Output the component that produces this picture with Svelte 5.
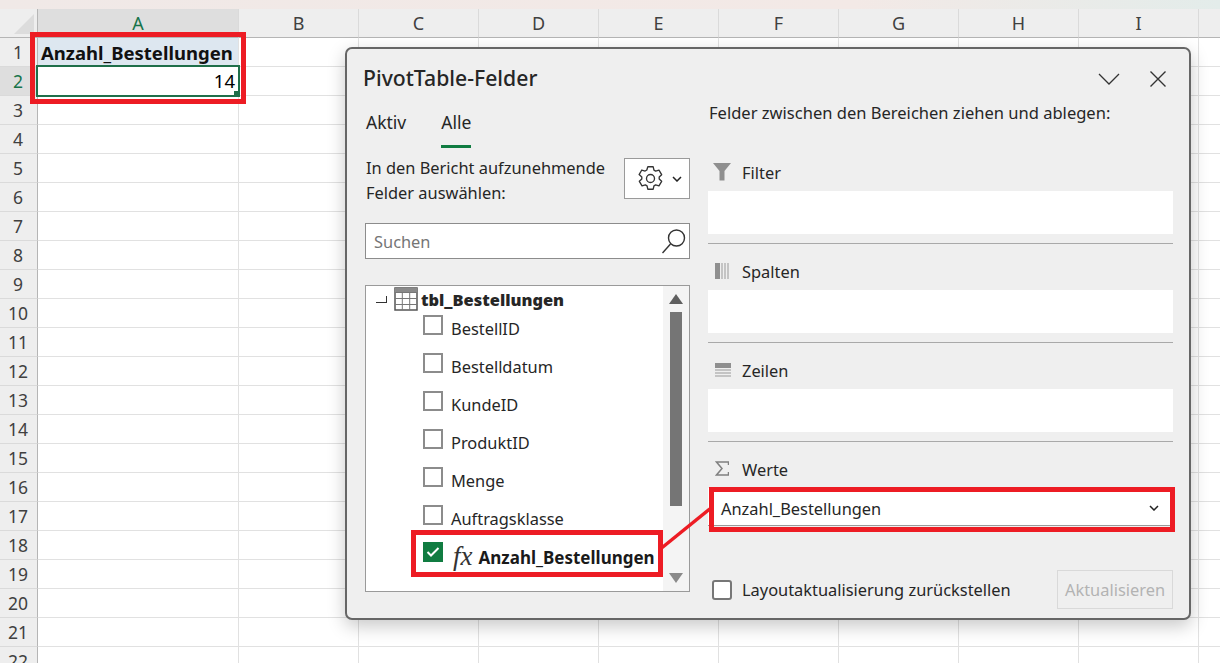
<script lang="ts">
  const cols = ["A", "B", "C", "D", "E", "F", "G", "H", "I", ""];
  const rows = Array.from({ length: 22 }, (_, i) => i + 1);
  const fields = ["BestellID", "Bestelldatum", "KundeID", "ProduktID", "Menge", "Auftragsklasse"];
  const areas = [
    { name: "Filter", icon: "filter" },
    { name: "Spalten", icon: "cols" },
    { name: "Zeilen", icon: "rows" },
  ];
</script>

<div class="sheet">
  <div class="topstrip"></div>

  <div class="grid">
    <div class="corner"><span class="tri"></span></div>
    {#each cols as c, i}
      <div class="colhead" class:sel={i === 0}>{c}</div>
    {/each}

    {#each rows as r}
      <div class="rowhead" class:sel={r === 2}>{r}</div>
      {#each cols as c, i}
        <div class="cell" class:head={r === 1 && i === 0} class:active={r === 2 && i === 0}>
          {#if r === 1 && i === 0}Anzahl_Bestellungen{/if}
          {#if r === 2 && i === 0}14<span class="handle"></span>{/if}
        </div>
      {/each}
    {/each}
  </div>

  <div class="mark mark-cell"></div>

  <section class="dialog">
    <div class="left">
      <h1>PivotTable-Felder</h1>
      <div class="tabs">
        <span>Aktiv</span>
        <span class="on">Alle</span>
      </div>
      <div class="pick">
        <p>In den Bericht aufzunehmende<br />Felder auswählen:</p>
        <button class="gear" aria-label="Einstellungen">
          <svg width="29" height="27" viewBox="0 0 26 24" fill="none" stroke="#333" stroke-width="1.2" stroke-linejoin="round">
            <path d="M10.6 1.5h4.8l.7 3 1.5.9 3-.9 2.4 4.1-2.2 2.1v1.700l2.2 2.1-2.4 4.1-3-.9-1.5.9-.7 3h-4.8l-.7-3-1.5-.9-3 .9-2.4-4.1 2.2-2.1v-1.700L2.800 8.500l2.400-4.100 3 .9 1.500-.9z" />
            <circle cx="13" cy="12" r="3.600" />
          </svg>
          <svg class="chev" width="10" height="6" viewBox="0 0 10 6" fill="none" stroke="#222" stroke-width="1.500"><path d="M1 1l4 4 4-4" /></svg>
        </button>
      </div>
      <div class="search">
        <span>Suchen</span>
        <svg width="26" height="27" viewBox="0 0 26 27" fill="none" stroke="#333" stroke-width="1.400"><circle cx="15.500" cy="10" r="8" /><path d="M9.500 16L1.500 25" /></svg>
      </div>
      <div class="list">
        <div class="tree">
          <div class="tablerow">
            <span class="collapse"></span>
            <svg width="24" height="24" viewBox="0 0 24 24" fill="#fff" stroke="#555" stroke-width="1">
              <rect x="1" y="1" width="22" height="22" fill="#fff" stroke-width="1.500" />
              <rect x="1" y="1" width="22" height="4.500" fill="#8a8a8a" stroke="none" />
              <path d="M1 5.500h22M1 11.500h22M1 17.500h22M8.300 5.500v17.500M15.700 5.500v17.500" stroke="#777" />
            </svg>
            <b>tbl_Bestellungen</b>
          </div>
          {#each fields as f}
            <div class="field"><span class="box"></span><span>{f}</span></div>
          {/each}
          <div class="field checked">
            <span class="box">
              <svg width="14" height="12" viewBox="0 0 14 12" fill="none" stroke="#fff" stroke-width="2"><path d="M1.500 6l3.500 3.500 7.500-7.500" /></svg>
            </span>
            <i>fx</i><b>Anzahl_Bestellungen</b>
            <div class="mark mark-field"></div>
          </div>
        </div>
        <div class="scroll">
          <span class="up"></span>
          <span class="thumb"></span>
          <span class="down"></span>
        </div>
      </div>
    </div>

    <div class="right">
      <div class="winbtns">
        <svg width="22" height="12" viewBox="0 0 22 12" fill="none" stroke="#333" stroke-width="1.300"><path d="M1 1l10 10 10-10" /></svg>
        <svg width="18" height="18" viewBox="0 0 18 18" fill="none" stroke="#333" stroke-width="1.400"><path d="M1.500 1.500l15 15M16.500 1.500l-15 15" /></svg>
      </div>
      <p class="hint">Felder zwischen den Bereichen ziehen und ablegen:</p>

      {#each areas as a}
        <div class="area">
          <div class="label">
            <span class="ico">
              {#if a.icon === "filter"}
                <svg class="funnel" width="20" height="18" viewBox="0 0 20 18" fill="#8f8f8f"><path d="M1 0h18l-6.500 8v9.500h-5V8z" /></svg>
              {:else if a.icon === "cols"}
                <svg width="14" height="16" viewBox="0 0 14 16" fill="#999"><rect x="0" y="0" width="5" height="16" fill="#8f8f8f" /><rect x="6.500" y="0" width="1" height="16" /><rect x="9.500" y="0" width="1" height="16" /><rect x="12.500" y="0" width="1" height="16" /></svg>
              {:else}
                <svg width="16" height="14" viewBox="0 0 16 14" fill="#999"><rect x="0" y="0" width="16" height="5" fill="#8f8f8f" /><rect x="0" y="6.500" width="16" height="1" /><rect x="0" y="9.500" width="16" height="1" /><rect x="0" y="12.500" width="16" height="1" /></svg>
              {/if}
            </span>
            {a.name}
          </div>
          <div class="drop"></div>
        </div>
      {/each}

      <div class="area last">
        <div class="label">
          <span class="ico"><svg width="14" height="15" viewBox="0 0 14 15" fill="none" stroke="#808080" stroke-width="1.500"><path d="M13.500 4V1H1.500l5.500 6.500L1.500 14h12v-3" /></svg></span>
          Werte
        </div>
        <div class="drop value">
          <span>Anzahl_Bestellungen</span>
          <svg width="10" height="6" viewBox="0 0 10 6" fill="none" stroke="#222" stroke-width="1.500"><path d="M1 1l4 4 4-4" /></svg>
          <div class="mark mark-value"></div>
        </div>
      </div>

      <div class="foot">
        <label><span class="defer"></span>Layoutaktualisierung zurückstellen</label>
        <button class="update" disabled>Aktualisieren</button>
      </div>
    </div>

    <svg class="link" width="60" height="46" viewBox="0 0 60 46"><path d="M2 43.500L52 3" stroke="#ed1c24" stroke-width="3.500" fill="none" /></svg>
  </section>
</div>

<style>
  :global(body) {
    margin: 0;
    background: #fff;
  }
  .sheet {
    position: relative;
    width: 1220px;
    height: 663px;
    overflow: hidden;
    font-family: "Noto Sans", "Open Sans", sans-serif;
    color: #262626;
  }
  .topstrip {
    height: 9px;
    background: linear-gradient(90deg, #f0e9e7, #f3e9e6 70%, #e3ecea);
  }
  .grid {
    display: grid;
    grid-template-columns: 38px 201px repeat(9, 120px);
    grid-template-rows: repeat(23, 29px);
    background: #fff;
  }
  .corner {
    background: #eeeeee;
    border-right: 1px solid #b5b5b5;
    border-bottom: 1px solid #b5b5b5;
    box-sizing: border-box;
    display: flex;
    align-items: flex-end;
    justify-content: flex-end;
    padding: 0 3px 3px 0;
  }
  .tri {
    width: 0;
    height: 0;
    border-left: 20px solid transparent;
    border-bottom: 20px solid #dcdcdc;
  }
  .colhead {
    background: #eeeeee;
    border-right: 1px solid #dadada;
    border-bottom: 1px solid #b5b5b5;
    box-sizing: border-box;
    display: flex;
    align-items: center;
    justify-content: center;
    font-size: 18px;
    color: #404040;
  }
  .colhead.sel {
    background: #dedede;
    color: #17744a;
  }
  .rowhead {
    background: #eeeeee;
    border-right: 1px solid #b5b5b5;
    border-bottom: 1px solid #dadada;
    box-sizing: border-box;
    display: flex;
    align-items: center;
    justify-content: center;
    font-size: 17.500px;
    color: #404040;
    padding-right: 1px;
  }
  .rowhead.sel {
    background: #dedede;
    color: #17744a;
  }
  .cell {
    border-right: 1px solid #e1e1e1;
    border-bottom: 1px solid #e1e1e1;
    box-sizing: border-box;
    position: relative;
    font-size: 18.500px;
    color: #000;
    min-width: 0;
  }
  .cell.head {
    background: #dde7f0;
    font-weight: 700;
    padding-left: 3px;
    line-height: 29px;
    white-space: nowrap;
    color: #111;
  }
  .cell.active {
    z-index: 2;
    border: 2px solid #1f6f4a;
    text-align: right;
    padding-right: 3px;
    line-height: 27px;
    margin: -2px 0 0 -2px;
    width: 204px;
    height: 32px;
    box-sizing: border-box;
    background: #fff;
  }
  .handle {
    position: absolute;
    right: -2px;
    bottom: -2px;
    width: 6px;
    height: 6px;
    background: #1f6f4a;
  }
  .mark {
    position: absolute;
    z-index: 1;
    border: 5px solid #ed1c24;
    box-sizing: border-box;
    pointer-events: none;
  }
  .mark-cell {
    left: 30px;
    top: 32px;
    width: 216px;
    height: 72px;
  }

  .dialog {
    position: absolute;
    z-index: 3;
    left: 345px;
    top: 47px;
    width: 846px;
    height: 573px;
    box-sizing: border-box;
    background: #efefef;
    border: 2px solid #666;
    border-radius: 7px;
    box-shadow: 0 6px 18px rgba(0, 0, 0, 0.22);
    display: flex;
    padding: 0 16px 0 18px;
    gap: 18px;
    font-size: 16.400px;
    color: #262626;
  }
  .left {
    width: 325px;
    flex: none;
    display: flex;
    flex-direction: column;
  }
  h1 {
    margin: 0 0 0 -2px;
    font-size: 21.200px;
    font-weight: 500;
    line-height: 28px;
    padding: 15px 0 0 0;
    color: #262626;
  }
  .tabs {
    display: flex;
    gap: 35px;
    padding: 18px 0 0 1px;
    height: 56px;
    box-sizing: border-box;
    line-height: 24px;
    font-size: 17.500px;
  }
  .tabs span {
    height: 38px;
    box-sizing: border-box;
  }
  .tabs .on {
    border-bottom: 3px solid #107c41;
    align-self: flex-start;
  }
  .pick {
    display: flex;
    justify-content: space-between;
    align-items: flex-start;
    margin-top: 10px;
  }
  .pick p {
    margin: -3px 0 0;
    padding-left: 1px;
    line-height: 25px;
  }
  .gear {
    width: 66px;
    height: 41px;
    border: 1px solid #9a9a9a;
    background: #fff;
    display: flex;
    align-items: center;
    justify-content: center;
    gap: 7px;
    padding: 0 0 0 4px;
  }
  .search {
    margin-top: 18px;
    height: 36px;
    box-sizing: border-box;
    background: #fff;
    border: 1px solid #8c8c8c;
    display: flex;
    align-items: center;
    justify-content: space-between;
    padding: 0 2px 0 8px;
    color: #757575;
  }
  .list {
    margin-top: 26px;
    height: 307px;
    box-sizing: border-box;
    background: #fff;
    border: 1px solid #9a9a9a;
    display: flex;
  }
  .tree {
    flex: 1;
    display: flex;
    flex-direction: column;
    padding-left: 10px;
  }
  .tablerow {
    display: flex;
    align-items: center;
    height: 24px;
    margin: 1px 0 -3px;
    font-weight: 700;
  }
  .tablerow b {
    margin-left: 3px;
  }
  .collapse {
    width: 11px;
    height: 7px;
    box-sizing: border-box;
    border-right: 1.500px solid #333;
    border-bottom: 1.500px solid #333;
    margin: 0 7px 0 0;
  }
  .field {
    position: relative;
    display: flex;
    align-items: center;
    height: 38px;
    padding-left: 47px;
    gap: 8px;
  }
  .box {
    width: 20px;
    height: 20px;
    box-sizing: border-box;
    border: 2px solid #8c8c8c;
    background: #fff;
    margin-top: -4px;
    display: flex;
    align-items: center;
    justify-content: center;
  }
  .field span:last-child {
    margin-top: 2px;
  }
  .field.checked .box {
    background: #107c41;
    border-color: #107c41;
    margin-top: -6px;
  }
  .field.checked i {
    font-family: "Liberation Serif", serif;
    font-size: 27px;
    margin: 2px -2px 0 2px;
    color: #333;
  }
  .field.checked b {
    font-size: 17px;
    color: #1a1a1a;
    margin-top: 4px;
  }
  .mark-field {
    left: 35px;
    top: -6px;
    width: 252px;
    height: 47px;
  }
  .scroll {
    width: 26px;
    background: #f4f4f4;
    display: flex;
    flex-direction: column;
    align-items: center;
    padding: 8px 0;
    box-sizing: border-box;
  }
  .up,
  .down {
    width: 0;
    height: 0;
    flex: none;
    border-left: 7px solid transparent;
    border-right: 7px solid transparent;
  }
  .up {
    border-bottom: 10px solid #5f5f5f;
  }
  .down {
    border-top: 10px solid #8a8a8a;
    margin-top: auto;
  }
  .thumb {
    width: 12px;
    height: 194px;
    background: #757575;
    margin-top: 8px;
  }

  .right {
    flex: 1;
    display: flex;
    flex-direction: column;
    min-width: 0;
  }
  .winbtns {
    display: flex;
    justify-content: flex-end;
    align-items: center;
    gap: 29px;
    height: 18px;
    padding: 21px 6px 0 0;
  }
  .hint {
    margin: 0;
    padding: 13px 0 0 1px;
    line-height: 24px;
    font-size: 16.550px;
  }
  .area {
    margin-top: 37px;
    padding-bottom: 9px;
    border-bottom: 1px solid #a9a9a9;
    margin-bottom: -1px;
  }
  .area + .area {
    margin-top: 18px;
  }
  .area.last {
    border-bottom: 0;
    padding-bottom: 0;
  }
  .label {
    display: flex;
    align-items: center;
    height: 24px;
    box-sizing: border-box;
    padding: 0 0 3px 5px;
  }
  .ico {
    width: 29px;
    flex: none;
    display: flex;
    justify-content: flex-start;
    padding-left: 2px;
    box-sizing: border-box;
    margin-top: -2px;
  }
  .funnel {
    margin-left: -3px;
  }
  .drop {
    height: 43px;
    background: #fff;
    margin-top: 5px;
  }
  .value {
    position: relative;
    height: 38px;
    display: flex;
    align-items: center;
    justify-content: space-between;
    padding: 3px 14px 0 13px;
    box-sizing: border-box;
    border-bottom: 1px solid #9a9a9a;
  }
  .mark-value {
    left: 1px;
    top: -1px;
    width: 466px;
    height: 45px;
  }
  .foot {
    margin-top: auto;
    margin-bottom: 9px;
    display: flex;
    justify-content: space-between;
    align-items: center;
  }
  .foot label {
    display: flex;
    align-items: center;
    gap: 10px;
    padding-left: 4px;
  }
  .defer {
    width: 20px;
    height: 20px;
    box-sizing: border-box;
    background: #fff;
    border: 2px solid #777;
    border-radius: 3px;
  }
  .update {
    width: 116px;
    height: 39px;
    background: #efefef;
    border: 1px solid #d9d9d9;
    color: #b3b3b3;
    font: inherit;
    padding: 0;
  }
  .link {
    position: absolute;
    z-index: 2;
    left: 312px;
    top: 456px;
  }
</style>
